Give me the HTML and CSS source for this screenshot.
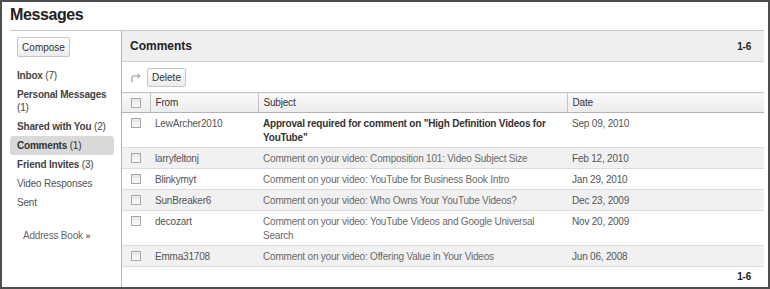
FILE: index.html
```html
<!DOCTYPE html>
<html lang="en">

<head>
    <meta charset="UTF-8" />
    <title>Messages</title>
    <link rel="stylesheet" href="styles.css">
</head>

<body>
    <div class="frame">
        <h1 class="page-title">Messages</h1>

        <div class="page-body">
            <!-- 왼쪽 메뉴 -->
            <div class="sidebar">
                <button class="btn compose-btn">Compose</button>
                <ul class="folder-list">
                    <li class="folder">Inbox <span class="count">(7)</span></li>
                    <li class="folder">Personal Messages <span class="count">(1)</span></li>
                    <li class="folder">Shared with You <span class="count">(2)</span></li>
                    <li class="folder selected">Comments <span class="count">(1)</span></li>
                    <li class="folder">Friend Invites <span class="count">(3)</span></li>
                    <li class="folder plain">Video Responses</li>
                    <li class="folder plain">Sent</li>
                </ul>
                <div class="address-book">Address Book <span class="raquo">&raquo;</span></div>
            </div>

            <!-- 오른쪽 목록 -->
            <div class="main">
                <div class="main-header">
                    <span class="main-title">Comments</span>
                    <span class="paging">1-6</span>
                </div>

                <div class="toolbar">
                    <svg class="forward-icon" width="12" height="11" viewBox="0 0 12 11">
                        <path d="M2 10.5 V6 Q2 4 4 4 H8" fill="none" stroke="#b4b4b4" stroke-width="1.6" />
                        <path d="M7.5 1 L11 4 L7.5 7 Z" fill="#b4b4b4" />
                    </svg>
                    <button class="btn delete-btn">Delete</button>
                </div>

                <table class="msg-table">
                    <colgroup>
                        <col class="col-check">
                        <col class="col-from">
                        <col class="col-subject">
                        <col>
                    </colgroup>
                    <thead>
                        <tr>
                            <th class="cell-check"><span class="checkbox"></span></th>
                            <th>From</th>
                            <th>Subject</th>
                            <th>Date</th>
                        </tr>
                    </thead>
                    <tbody>
                        <tr class="unread">
                            <td class="cell-check"><span class="checkbox"></span></td>
                            <td>LewArcher2010</td>
                            <td class="subject">Approval required for comment on "High Definition Videos for YouTube"</td>
                            <td>Sep 09, 2010</td>
                        </tr>
                        <tr class="alt">
                            <td class="cell-check"><span class="checkbox"></span></td>
                            <td>larryfeltonj</td>
                            <td class="subject">Comment on your video: Composition 101: Video Subject Size</td>
                            <td>Feb 12, 2010</td>
                        </tr>
                        <tr>
                            <td class="cell-check"><span class="checkbox"></span></td>
                            <td>Blinkymyt</td>
                            <td class="subject">Comment on your video: YouTube for Business Book Intro</td>
                            <td>Jan 29, 2010</td>
                        </tr>
                        <tr class="alt">
                            <td class="cell-check"><span class="checkbox"></span></td>
                            <td>SunBreaker6</td>
                            <td class="subject">Comment on your video: Who Owns Your YouTube Videos?</td>
                            <td>Dec 23, 2009</td>
                        </tr>
                        <tr>
                            <td class="cell-check"><span class="checkbox"></span></td>
                            <td>decozart</td>
                            <td class="subject">Comment on your video: YouTube Videos and Google Universal Search</td>
                            <td>Nov 20, 2009</td>
                        </tr>
                        <tr class="alt">
                            <td class="cell-check"><span class="checkbox"></span></td>
                            <td>Emma31708</td>
                            <td class="subject">Comment on your video: Offering Value in Your Videos</td>
                            <td>Jun 06, 2008</td>
                        </tr>
                    </tbody>
                </table>

                <div class="main-footer">
                    <span class="paging">1-6</span>
                </div>
            </div>
        </div>
    </div>
</body>

</html>
```

FILE: styles.css
```css
* {
    box-sizing: border-box;
}

body {
    margin: 0;
    font-family: "Liberation Sans", Arial, sans-serif;
    font-size: 10px;
    letter-spacing: -0.2px;
    color: #444;
    background: #fff;
}

.frame {
    display: flex;
    flex-direction: column;
    width: 770px;
    height: 289px;
    border: 2px solid #4d4d4d;
    overflow: hidden;
}

.page-title {
    flex-shrink: 0;
    margin: 0;
    padding: 4px 0 0 8px;
    height: 28px;
    font-size: 16px;
    letter-spacing: -0.4px;
    font-weight: bold;
    color: #222;
}

.page-body {
    flex: 1;
    display: flex;
    margin: 0 4px 0 8px;
    border-top: 1px solid #c8c8c8;
}

/* 왼쪽 메뉴 */
.sidebar {
    flex-shrink: 0;
    width: 111px;
    padding: 6px 0 0 0;
}

.btn {
    height: 20px;
    padding: 0;
    border: 1px solid #c6c6c6;
    border-radius: 2px;
    background: linear-gradient(#fff, #ececec);
    font-family: inherit;
    font-size: 10px;
    letter-spacing: 0;
    color: #333;
}

.compose-btn {
    margin-left: 7px;
    width: 53px;
}

.folder-list {
    list-style: none;
    margin: 9px 0 0 0;
    padding: 0;
}

.folder {
    width: 104px;
    padding: 3px 7px;
    line-height: 13px;
    font-weight: bold;
    color: #444;
    border-radius: 3px;
}

.folder .count {
    font-weight: normal;
}

.folder.plain {
    font-weight: normal;
    color: #555;
}

.folder.selected {
    background: #d9d9d9;
    color: #333;
}

.address-book {
    margin: 17px 0 0 13px;
    line-height: 13px;
    color: #666;
}

.raquo {
    font-size: 9px;
    font-weight: bold;
}

/* 오른쪽 목록 */
.main {
    flex: 1;
    display: flex;
    flex-direction: column;
    border-left: 1px solid #b8b8b8;
}

.main-header {
    flex-shrink: 0;
    display: flex;
    justify-content: space-between;
    align-items: center;
    height: 31px;
    padding: 0 13px 0 8px;
    background: #efefef;
    border-bottom: 1px solid #d0d0d0;
}

.main-title {
    font-size: 12px;
    letter-spacing: 0;
    font-weight: bold;
    color: #222;
}

.paging {
    font-weight: bold;
    color: #222;
}

.toolbar {
    flex-shrink: 0;
    display: flex;
    align-items: center;
    gap: 5px;
    height: 30px;
    padding: 0 0 0 8px;
}

.delete-btn {
    width: 39px;
    height: 19px;
}

.msg-table {
    width: 100%;
    border-collapse: collapse;
    table-layout: fixed;
}

.col-check {
    width: 28px;
}

.col-from {
    width: 108px;
}

.col-subject {
    width: 309px;
}

.msg-table th {
    height: 20px;
    padding: 0 5px;
    text-align: left;
    font-weight: normal;
    color: #333;
    background: linear-gradient(#fafafa, #ececec);
    border-top: 1px solid #c4c4c4;
    border-bottom: 1px solid #b4b4b4;
    border-left: 1px solid #c4c4c4;
}

.msg-table th:first-child {
    border-left: none;
}

.msg-table td {
    padding: 4px 5px 2px;
    line-height: 14px;
    vertical-align: top;
    color: #555;
    border-bottom: 1px solid #dcdcdc;
}

.msg-table td.subject {
    color: #6a6a6a;
}

.msg-table tr.unread td.subject {
    font-weight: bold;
    color: #333;
}

.msg-table tr.alt td {
    background: #f1f1f1;
}

.msg-table .cell-check {
    padding: 4px 0 0 0;
    text-align: center;
}

.msg-table th.cell-check {
    padding: 0;
}

.checkbox {
    display: inline-block;
    width: 10px;
    height: 10px;
    border: 1px solid #a8a8a8;
    background: linear-gradient(#e6e6e6, #fafafa);
    vertical-align: middle;
}

.msg-table td .checkbox {
    vertical-align: top;
    margin-top: 1px;
}

.main-footer {
    display: flex;
    justify-content: flex-end;
    padding: 3px 13px 0 0;
    line-height: 13px;
}
```
